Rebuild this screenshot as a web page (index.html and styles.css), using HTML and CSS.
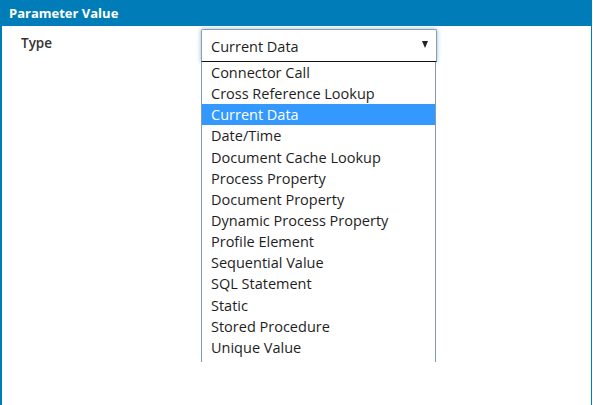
FILE: index.html
```html
<!DOCTYPE html>
<html>
<head>
<meta charset="utf-8">
<link rel="stylesheet" href="styles.css">
</head>
<body>
<div class="dialog">
  <div class="header">Parameter Value</div>
  <div class="content">
    <div class="row">
      <div class="label">Type</div>
      <div class="field">
        <div class="select">
          <span class="value">Current Data</span>
          <span class="arrow"></span>
        </div>
        <ul class="list">
          <li>Connector Call</li>
          <li>Cross Reference Lookup</li>
          <li class="selected">Current Data</li>
          <li>Date/Time</li>
          <li>Document Cache Lookup</li>
          <li>Process Property</li>
          <li>Document Property</li>
          <li>Dynamic Process Property</li>
          <li>Profile Element</li>
          <li>Sequential Value</li>
          <li>SQL Statement</li>
          <li>Static</li>
          <li>Stored Procedure</li>
          <li>Unique Value</li>
        </ul>
      </div>
    </div>
  </div>
</div>
</body>
</html>
```

FILE: styles.css
```css
html, body {
  margin: 0;
  padding: 0;
  background: #ffffff;
}
body {
  font-family: "Open Sans", "Liberation Sans", sans-serif;
  color: #222;
}
.dialog {
  width: 589px;
  height: 405px;
  border-left: 2px solid #007db8;
  border-right: 1px solid #007db8;
  margin-right: 1px;
  display: flex;
  flex-direction: column;
}
.header {
  height: 26px;
  background: #007db8;
  color: #ffffff;
  font-weight: 700;
  font-size: 13px;
  line-height: 26px;
  padding-left: 7px;
}
.content {
  flex: 1;
  padding-top: 3px;
}
.row {
  display: flex;
}
.label {
  width: 180px;
  padding-left: 19px;
  font-size: 13.5px;
  font-weight: 600;
  color: #333;
  line-height: 28px;
}
.field {
  position: relative;
  width: 236px;
}
.select {
  box-sizing: border-box;
  height: 33px;
  border: 1px solid #9a9a9a;
  border-bottom-color: #111;
  border-radius: 2px 2px 0 0;
  box-shadow: 0 0 4px rgba(82, 168, 236, 0.75);
  display: flex;
  align-items: center;
  justify-content: space-between;
  padding: 1px 8px 0 9px;
  font-size: 14.5px;
  color: #1e1e1e;
}
.arrow {
  width: 0;
  height: 0;
  border-left: 3.5px solid transparent;
  border-right: 3.5px solid transparent;
  border-top: 7px solid #222;
  margin-top: -3px;
}
.list {
  position: absolute;
  top: 33px;
  left: 0;
  width: 235px;
  box-sizing: border-box;
  margin: 0;
  padding: 0 0 4px;
  list-style: none;
  border-left: 1px solid #7f9db9;
  border-right: 1px solid #7f9db9;
  background: #fff;
}
.list li {
  height: 21.15px;
  line-height: 21.15px;
  padding-left: 9px;
  font-size: 14.5px;
  color: #1e1e1e;
  white-space: nowrap;
}
.list li.selected {
  background: #3399ff;
  color: #ffffff;
}
```
